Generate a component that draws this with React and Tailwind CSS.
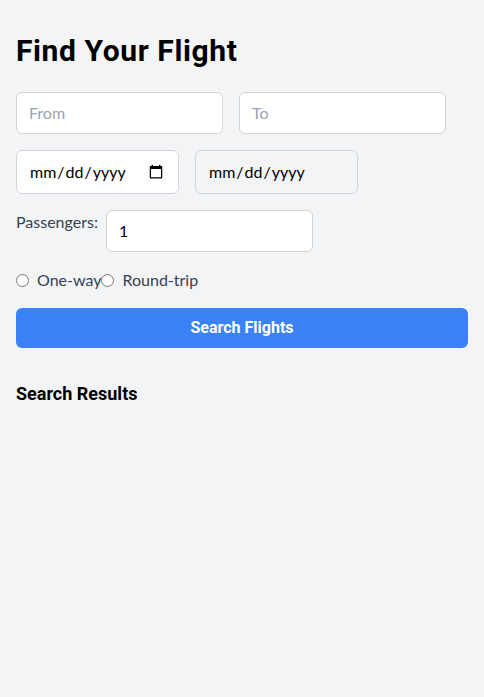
import { useState } from "react";

const App = () => {
  const [tripType, setTripType] = useState("");
  const [passengers, setPassengers] = useState(1);

  return (
    <div className="min-h-screen bg-[#f3f4f6] px-4 py-8 font-['Lato',sans-serif] text-black">
      <h1 className="text-3xl font-bold mb-6 pt-[2px] leading-[34px] tracking-[0.6px] font-['Roboto',sans-serif]">
        Find Your Flight
      </h1>

      {/* from / to */}
      <div className="flex gap-4 mb-4">
        <input
          type="text"
          placeholder="From"
          className="w-[207px] bg-white border border-[#d1d5db] rounded-md px-3 py-2 outline-none placeholder:text-[#9ca3af]"
        />
        <input
          type="text"
          placeholder="To"
          className="w-[207px] bg-white border border-[#d1d5db] rounded-md px-3 py-2 outline-none placeholder:text-[#9ca3af]"
        />
      </div>

      {/* dates */}
      <div className="flex gap-4 mb-4">
        <input
          type="date"
          className="w-[163px] h-[44px] bg-white border border-[#d1d5db] rounded-md px-3 py-2 outline-none"
        />
        <input
          type="date"
          disabled
          className="w-[163px] h-[44px] bg-[#f3f4f6] border border-[#d1d5db] rounded-md px-3 py-2 outline-none text-black"
        />
      </div>

      {/* passengers */}
      <div className="flex items-start gap-2 mb-4">
        <label className="text-[#374151]">Passengers:</label>
        <input
          type="number"
          min={1}
          value={passengers}
          onChange={(e) => setPassengers(e.target.value)}
          className="w-[207px] bg-white border border-[#d1d5db] rounded-md px-3 py-2 outline-none"
        />
      </div>

      {/* trip type */}
      <div className="flex items-center mb-4 text-[#374151]">
        <label className="flex items-center">
          <input
            type="radio"
            name="trip"
            checked={tripType === "one-way"}
            onChange={() => setTripType("one-way")}
          />
          <span className="ml-2">One-way</span>
        </label>
        <label className="flex items-center">
          <input
            type="radio"
            name="trip"
            checked={tripType === "round-trip"}
            onChange={() => setTripType("round-trip")}
          />
          <span className="ml-2">Round-trip</span>
        </label>
      </div>

      <button className="w-full bg-[#3b82f6] text-white font-bold py-2 rounded-md hover:bg-[#2563eb] font-['Roboto',sans-serif]">
        Search Flights
      </button>

      <h2 className="text-lg font-bold mt-8 font-['Roboto',sans-serif]">Search Results</h2>
    </div>
  );
};

export default App;
